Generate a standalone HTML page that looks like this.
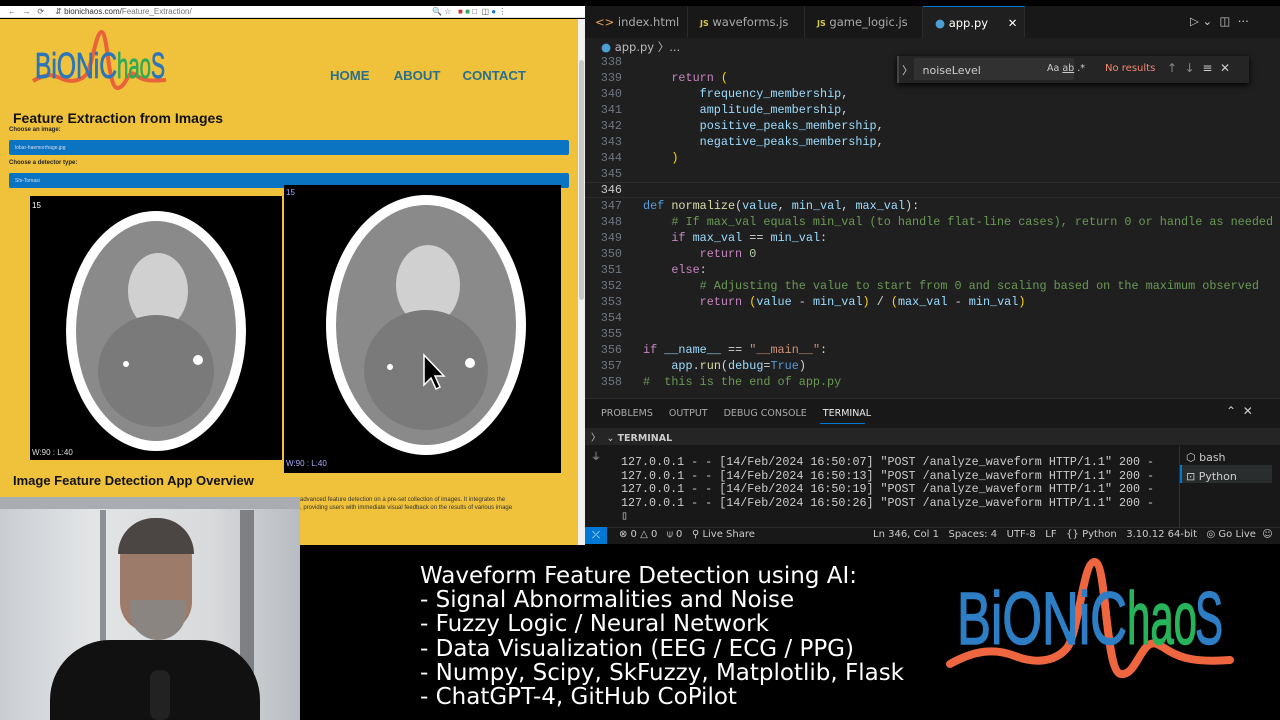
<!DOCTYPE html>
<html><head><meta charset="utf-8">
<style>
*{margin:0;padding:0;box-sizing:border-box}
body{width:1280px;height:720px;background:#000;position:relative;overflow:hidden;font-family:"Liberation Sans",sans-serif}
.abs{position:absolute}
.mono{font-family:"Liberation Mono","DejaVu Sans Mono",monospace}
.code div{height:16px;line-height:16px;white-space:pre;font-size:11.8px;color:#d4d4d4}
.ln{color:#6e7681;text-align:right;width:36px;font-size:11.8px;line-height:16px;height:16px}
.k{color:#c586c0}.f{color:#dcdcaa}.b{color:#569cd6}.c{color:#6a9955}.s{color:#ce9178}.n{color:#b5cea8}.p{color:#ffd700}.v{color:#9cdcfe}
.term div{height:13.6px;line-height:13.6px;font-size:11.7px;color:#ccc;white-space:pre}
.bl div{font-family:"DejaVu Sans",sans-serif;font-size:23px;color:#fff;line-height:24.2px;white-space:pre}
.tab{position:absolute;top:0;height:32px;border-right:1px solid #2a2a2a;padding:9px 10px;white-space:nowrap}
</style></head><body>
<!-- browser -->
<div class="abs" style="left:0;top:6px;width:585px;height:12px;background:#fff;border-bottom:1px solid #ddd"></div>
<div class="abs" style="left:8px;top:6px;font-size:8px;color:#555;line-height:12px">←&nbsp;&nbsp;&nbsp;→&nbsp;&nbsp;&nbsp;⟳&nbsp;&nbsp;&nbsp;&nbsp;&nbsp;⇵ <span style="color:#333">bionichaos.com/</span><span style="color:#777">Feature_Extraction/</span></div>
<div class="abs" style="left:432px;top:7px;font-size:8px;color:#555;line-height:10px">🔍 ☆ &nbsp;&nbsp;<span style="color:#c33">■</span> <span style="color:#3a6">■</span> □ &nbsp;◫ <span style="color:#1a73e8">●</span> ⋮</div>
<div class="abs" style="left:0;top:19px;width:578px;height:526px;background:#f0c23b"></div>
<div class="abs" style="left:578px;top:19px;width:7px;height:526px;background:#f1f1f1"></div>
<div class="abs" style="left:579px;top:60px;width:5px;height:240px;background:#c8c8c8;border-radius:3px"></div>
<!-- logo -->
<svg class="abs" style="left:30px;top:30px" width="140" height="64" viewBox="0 0 140 64">
<path d="M3 51 C15 44 22 44 30 48 C40 53 50 51 56 45 C62 38 66 0 72 2 C78 4 78 60 88 58 C96 57 98 40 104 44 C110 48 112 52 136 50" stroke="#e8623a" stroke-width="4" fill="none"/>
<text x="5" y="48" font-family="Liberation Sans,sans-serif" font-size="36" fill="#2b76b8" textLength="82" lengthAdjust="spacingAndGlyphs" stroke="#2b76b8" stroke-width="0.8">BiONiC</text>
<text x="87" y="48" font-family="Liberation Sans,sans-serif" font-size="36" fill="#2faa56" textLength="34" lengthAdjust="spacingAndGlyphs" stroke="#2faa56" stroke-width="0.8">hao</text>
<text x="121" y="48" font-family="Liberation Sans,sans-serif" font-size="36" fill="#2b76b8" textLength="14" lengthAdjust="spacingAndGlyphs" stroke="#2b76b8" stroke-width="0.8">S</text>
</svg>
<div class="abs" style="left:330px;top:68px;font-size:13.2px;font-weight:bold;color:#2a6f8c;white-space:nowrap">HOME<span style="margin-left:24px">ABOUT</span><span style="margin-left:22px">CONTACT</span></div>
<div class="abs" style="left:13px;top:110px;font-size:14px;font-weight:bold;color:#111">Feature Extraction from Images</div>
<div class="abs" style="left:9px;top:127px;font-size:6px;font-weight:bold;color:#222">Choose an image:</div>
<div class="abs" style="left:9px;top:140px;width:560px;height:15px;background:#0a73c2;border-radius:2px;font-size:5px;color:#dde;padding:5px 6px">lobar-haemorrhage.jpg</div>
<div class="abs" style="left:9px;top:160px;font-size:6px;font-weight:bold;color:#222">Choose a detector type:</div>
<div class="abs" style="left:9px;top:173px;width:560px;height:15px;background:#0a73c2;border-radius:2px;font-size:5px;color:#dde;padding:5px 6px">Shi-Tomasi</div>
<!-- CT left -->
<svg class="abs" style="left:30px;top:196px" width="252" height="264">
<rect width="252" height="264" fill="#000"/>
<ellipse cx="126" cy="135" rx="90" ry="120" fill="#fff"/>
<ellipse cx="126" cy="135" rx="80" ry="110" fill="#8a8a8a"/>
<ellipse cx="128" cy="95" rx="30" ry="38" fill="#d0d0d0"/>
<ellipse cx="126" cy="175" rx="58" ry="56" fill="#7a7a7a"/>
<circle cx="168" cy="164" r="5" fill="#fff"/><circle cx="96" cy="168" r="3" fill="#fff"/>
<text x="2" y="12" fill="#fff" font-size="8">15</text><text x="2" y="259" fill="#ddd" font-size="8">W:90 : L:40</text>
</svg>
<!-- CT right -->
<svg class="abs" style="left:284px;top:185px" width="277" height="288">
<rect width="277" height="288" fill="#000"/>
<ellipse cx="142" cy="140" rx="100" ry="130" fill="#fff"/>
<ellipse cx="142" cy="140" rx="90" ry="120" fill="#8a8a8a"/>
<ellipse cx="144" cy="100" rx="32" ry="40" fill="#d0d0d0"/>
<ellipse cx="142" cy="185" rx="62" ry="60" fill="#7a7a7a"/>
<circle cx="186" cy="178" r="5" fill="#fff"/><circle cx="106" cy="182" r="3" fill="#fff"/>
<path d="M140 170 L140 200 L147 193 L152 204 L156 202 L151 191 L160 191 Z" fill="#000" stroke="#fff" stroke-width="1.5"/>
<text x="2" y="10" fill="#aaf" font-size="8">15</text><text x="2" y="281" fill="#aaf" font-size="8">W:90 : L:40</text>
</svg>
<div class="abs" style="left:13px;top:473px;font-size:13px;font-weight:bold;color:#111">Image Feature Detection App Overview</div>
<div class="abs" style="left:300px;top:496px;font-size:6px;color:#333;line-height:8px">advanced feature detection on a pre-set collection of images. It integrates the<br>, providing users with immediate visual feedback on the results of various image</div>
<!-- webcam -->
<div class="abs" style="left:0;top:497px;width:300px;height:223px;background:linear-gradient(90deg,#c9cdd2 0,#e2e4e6 30%,#d8dadc 70%,#b8bcc0 100%)"></div>
<div class="abs" style="left:0;top:497px;width:300px;height:12px;background:#a9adb1"></div>
<div class="abs" style="left:100px;top:510px;width:6px;height:210px;background:#8d9094"></div>
<div class="abs" style="left:240px;top:510px;width:14px;height:210px;background:#7e8084"></div>
<div class="abs" style="left:120px;top:522px;width:72px;height:110px;border-radius:36px 36px 30px 30px;background:#9c7b6a"></div>
<div class="abs" style="left:118px;top:518px;width:76px;height:36px;border-radius:38px 38px 0 0;background:#4b4644"></div>
<div class="abs" style="left:130px;top:600px;width:56px;height:40px;border-radius:0 0 28px 28px;background:#8a8580"></div>
<div class="abs" style="left:50px;top:640px;width:210px;height:80px;border-radius:60px 60px 0 0;background:#111"></div>
<div class="abs" style="left:150px;top:670px;width:20px;height:50px;background:#222;border-radius:8px"></div>
<!-- VS Code -->
<div class="abs" style="left:585px;top:6px;width:695px;height:32px;background:#181818"></div>
<div class="abs" style="left:585px;top:6px;width:695px;height:32px;font-size:11.5px;color:#aaa;font-family:'DejaVu Sans',sans-serif">
<div class="tab" style="left:0;width:103px"><span style="color:#e8a057">&lt;&gt;</span> index.html</div>
<div class="tab" style="left:103px;width:117px;padding-left:12px"><span style="color:#d7c94a;font-size:8px;font-weight:bold">JS</span> waveforms.js</div>
<div class="tab" style="left:220px;width:118px;padding-left:12px"><span style="color:#d7c94a;font-size:8px;font-weight:bold">JS</span> game_logic.js</div>
<div class="tab" style="left:338px;width:102px;background:#1f1f1f;border-top:1px solid #0078d4;padding-left:12px;color:#fff"><span style="color:#4a9fd5">●</span> app.py <span style="margin-left:16px">✕</span></div>
<div class="abs" style="left:605px;top:8px;color:#ccc;white-space:nowrap">▷ ⌄ &nbsp;◫ &nbsp;⋯</div>
</div>
<div class="abs" style="left:585px;top:38px;width:695px;height:360px;background:#1f1f1f"></div>
<div class="abs" style="left:601px;top:39px;font-size:11.5px;color:#bbb;font-family:'DejaVu Sans',sans-serif"><span style="color:#4a9fd5">●</span> app.py 〉...</div>
<div class="abs" style="left:585px;top:182px;width:695px;height:16px;border-top:1px solid #2c2c2c;border-bottom:1px solid #2c2c2c"></div>
<div class="abs mono" style="left:586px;top:54px">
<div class="ln">338</div><div class="ln">339</div><div class="ln">340</div><div class="ln">341</div><div class="ln">342</div><div class="ln">343</div><div class="ln">344</div><div class="ln">345</div><div class="ln" style="color:#ccc">346</div><div class="ln">347</div><div class="ln">348</div><div class="ln">349</div><div class="ln">350</div><div class="ln">351</div><div class="ln">352</div><div class="ln">353</div><div class="ln">354</div><div class="ln">355</div><div class="ln">356</div><div class="ln">357</div><div class="ln">358</div></div>
<div class="abs mono code" style="left:643px;top:54px;width:632px;overflow:hidden">
<div> </div>
<div>    <span class="k">return</span> <span class="p">(</span></div>
<div>        <span class="v">frequency_membership</span>,</div>
<div>        <span class="v">amplitude_membership</span>,</div>
<div>        <span class="v">positive_peaks_membership</span>,</div>
<div>        <span class="v">negative_peaks_membership</span>,</div>
<div>    <span class="p">)</span></div>
<div> </div><div> </div>
<div><span class="b">def</span> <span class="f">normalize</span>(<span class="v">value</span>, <span class="v">min_val</span>, <span class="v">max_val</span>):</div>
<div>    <span class="c"># If max_val equals min_val (to handle flat-line cases), return 0 or handle as needed</span></div>
<div>    <span class="k">if</span> <span class="v">max_val</span> == <span class="v">min_val</span>:</div>
<div>        <span class="k">return</span> <span class="n">0</span></div>
<div>    <span class="k">else</span>:</div>
<div>        <span class="c"># Adjusting the value to start from 0 and scaling based on the maximum observed</span></div>
<div>        <span class="k">return</span> <span class="p">(</span><span class="v">value</span> - <span class="v">min_val</span><span class="p">)</span> / <span class="p">(</span><span class="v">max_val</span> - <span class="v">min_val</span><span class="p">)</span></div>
<div> </div><div> </div>
<div><span class="k">if</span> <span class="v">__name__</span> == <span class="s">"__main__"</span>:</div>
<div>    <span class="v">app</span>.<span class="f">run</span>(<span class="v">debug</span>=<span class="b">True</span>)</div>
<div><span class="c">#  this is the end of app.py</span></div>
</div>
<!-- find widget -->
<div class="abs" style="left:897px;top:56px;width:352px;height:27px;background:#252526;box-shadow:0 2px 6px #000;border-left:2px solid #444"></div>
<div class="abs" style="left:914px;top:58px;width:160px;height:22px;background:#313131"></div>
<div class="abs" style="left:902px;top:62px;font-size:11px;color:#ccc;font-family:'DejaVu Sans',sans-serif;white-space:nowrap">〉 <span style="margin-left:6px">noiseLevel</span></div>
<div class="abs" style="left:1047px;top:63px;font-size:9.5px;color:#ccc;font-family:'DejaVu Sans',sans-serif;white-space:nowrap">Aa <u>ab</u> .*</div>
<div class="abs" style="left:1105px;top:63px;font-size:10px;color:#f48771;font-family:'DejaVu Sans',sans-serif;white-space:nowrap">No results</div>
<div class="abs" style="left:1167px;top:61px;font-size:12px;color:#888;font-family:'DejaVu Sans',sans-serif;white-space:nowrap">↑ &nbsp;↓ &nbsp;<span style="color:#ccc">≡ &nbsp;✕</span></div>
<!-- panel -->
<div class="abs" style="left:585px;top:398px;width:695px;height:129px;background:#181818;border-top:1px solid #2b2b2b"></div>
<div class="abs" style="left:601px;top:408px;font-size:9.5px;color:#aaa;font-family:'DejaVu Sans',sans-serif;white-space:nowrap">PROBLEMS<span style="margin-left:16px">OUTPUT</span><span style="margin-left:16px">DEBUG CONSOLE</span><span style="margin-left:16px;color:#eee">TERMINAL</span></div>
<div class="abs" style="left:820px;top:423px;width:45px;height:1px;background:#0078d4"></div>
<div class="abs" style="left:1226px;top:404px;font-size:12px;color:#ccc">⌃ &nbsp;✕</div>
<div class="abs" style="left:585px;top:428px;width:695px;height:17px;background:#252526"></div>
<div class="abs" style="left:591px;top:430px;font-size:9.5px;color:#ccc;font-family:'DejaVu Sans',sans-serif;white-space:nowrap">〉 &nbsp;⌄ <b>TERMINAL</b></div>
<div class="abs" style="left:591px;top:448px;font-size:10px;color:#aaa">⏚</div>
<div class="abs mono term" style="left:621px;top:456px">
<div>127.0.0.1 - - [14/Feb/2024 16:50:07] "POST /analyze_waveform HTTP/1.1" 200 -</div>
<div>127.0.0.1 - - [14/Feb/2024 16:50:13] "POST /analyze_waveform HTTP/1.1" 200 -</div>
<div>127.0.0.1 - - [14/Feb/2024 16:50:19] "POST /analyze_waveform HTTP/1.1" 200 -</div>
<div>127.0.0.1 - - [14/Feb/2024 16:50:26] "POST /analyze_waveform HTTP/1.1" 200 -</div>
<div>▯</div></div>
<div class="abs" style="left:1179px;top:446px;width:1px;height:81px;background:#333"></div>
<div class="abs" style="left:1180px;top:465px;width:92px;height:18px;background:#2a2d2e;border-left:2px solid #0078d4"></div>
<div class="abs" style="left:1186px;top:448px;font-size:11px;color:#ccc;font-family:'DejaVu Sans',sans-serif;line-height:19px">⬡ bash<br>⊡ Python</div>
<!-- status -->
<div class="abs" style="left:585px;top:527px;width:695px;height:17px;background:#181818;border-top:1px solid #2b2b2b"></div>
<div class="abs" style="left:585px;top:527px;width:22px;height:17px;background:#0078d4;color:#fff;font-size:10px;text-align:center;line-height:17px">⤫</div>
<div class="abs" style="left:619px;top:529px;font-size:10px;color:#ccc;font-family:'DejaVu Sans',sans-serif;white-space:pre">⊗ 0 △ 0   ⍦ 0   ⚲ Live Share</div>
<div class="abs" style="left:873px;top:529px;font-size:10px;color:#ccc;font-family:'DejaVu Sans',sans-serif;white-space:pre">Ln 346, Col 1   Spaces: 4   UTF-8   LF   {} Python   3.10.12 64-bit   ◎ Go Live  ☺</div>
<!-- bottom text -->
<div class="abs bl" style="left:420px;top:564px">
<div>Waveform Feature Detection using AI:</div>
<div>- Signal Abnormalities and Noise</div>
<div>- Fuzzy Logic / Neural Network</div>
<div>- Data Visualization (EEG / ECG / PPG)</div>
<div>- Numpy, Scipy, SkFuzzy, Matplotlib, Flask</div>
<div>- ChatGPT-4, GitHub CoPilot</div>
</div>
<!-- big logo -->
<svg class="abs" style="left:945px;top:552px" width="290" height="135" viewBox="0 0 290 135">
<path d="M5 112 C30 98 50 96 70 104 C90 112 110 110 122 96 C134 80 138 8 150 10 C162 12 160 120 176 122 C192 124 196 86 212 92 C226 98 232 112 285 108" stroke="#ee6640" stroke-width="8" fill="none" stroke-linecap="round"/>
<text x="12" y="92" font-family="Liberation Sans,sans-serif" font-size="74" fill="#2d7ec4" stroke="#2d7ec4" stroke-width="1.5" textLength="170" lengthAdjust="spacingAndGlyphs">BiONiC</text>
<text x="182" y="92" font-family="Liberation Sans,sans-serif" font-size="74" fill="#27b35a" stroke="#27b35a" stroke-width="1.5" textLength="70" lengthAdjust="spacingAndGlyphs">hao</text>
<text x="250" y="92" font-family="Liberation Sans,sans-serif" font-size="74" fill="#2d7ec4" stroke="#2d7ec4" stroke-width="1.5" textLength="28" lengthAdjust="spacingAndGlyphs">S</text>
</svg>
</body></html>
